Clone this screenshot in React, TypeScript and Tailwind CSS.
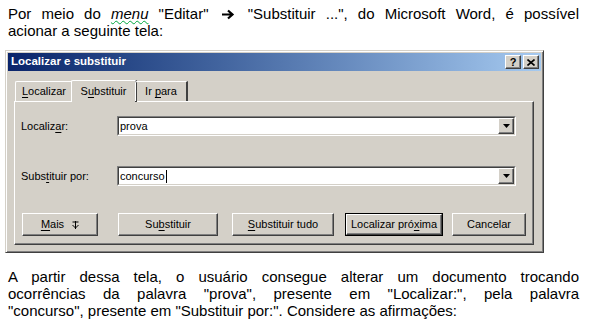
import React from "react";

const raised =
  "border border-t-white border-l-white border-r-[#404040] border-b-[#404040] shadow-[inset_-1px_-1px_0_#808080] bg-[#d4d0c8]";

function Key({ children }: { children: React.ReactNode }) {
  return <span className="underline underline-offset-[2px] decoration-1">{children}</span>;
}

function Combo({ value, caret }: { value: string; caret?: boolean }) {
  return (
    <div className="w-[399px] h-[20px] flex bg-white border border-t-[#808080] border-l-[#808080] border-r-white border-b-white">
      <div className="flex-1 flex items-center border border-t-[#404040] border-l-[#404040] border-r-[#d4d0c8] border-b-[#d4d0c8] pl-[1px]">
        <span className="text-[11px] leading-none text-black">{value}</span>
        {caret && <span className="inline-block w-[1px] h-[13px] bg-black ml-[1px]" />}
        <div className="flex-1" />
        <div className={`${raised} w-[16px] h-[16px] flex items-center justify-center`}>
          <svg width="7" height="4" viewBox="0 0 7 4">
            <path d="M0 0h7L3.5 4z" fill="#000" />
          </svg>
        </div>
      </div>
    </div>
  );
}

function Btn({ w, children, def }: { w: string; children: React.ReactNode; def?: boolean }) {
  const inner = <span className="flex items-center whitespace-pre">{children}</span>;
  if (def) {
    return (
      <div className={`${w} h-[23px] border border-black`}>
        <div className={`${raised} w-full h-full flex items-center justify-center text-[11px] text-black`}>
          {inner}
        </div>
      </div>
    );
  }
  return (
    <div className={`${raised} ${w} h-[23px] flex items-center justify-center text-[11px] text-black`}>
      {inner}
    </div>
  );
}

function Arrow() {
  return (
    <svg width="13" height="11" viewBox="0 0 13 11" className="inline-block align-[-1px] mx-[3px]">
      <path d="M0 5.5h10M6 1.5l4.5 4-4.5 4" stroke="#000" strokeWidth="2.2" fill="none" />
    </svg>
  );
}

const jline = "block text-justify [text-align-last:justify]";

export default function App() {
  return (
    <div className="w-[593px] h-[335px] bg-white overflow-hidden font-['Liberation_Sans',Arial,sans-serif] text-black">
      <div className="w-[571px] ml-[8px] pt-[5px] text-[15px] leading-[17px]">
        <span className={jline}>
          Por meio do <i className="underline decoration-wavy decoration-green-600 decoration-1">menu</i> "Editar" <Arrow /> "Substituir ...", do Microsoft Word, é possível
        </span>
        <span className="block">acionar a seguinte tela:</span>
      </div>

      <div className="ml-[5px] mt-[11px] w-[539px] h-[203px] bg-[#d4d0c8] border border-t-[#d4d0c8] border-l-[#d4d0c8] border-r-[#404040] border-b-[#404040] shadow-[inset_1px_1px_0_#fff,inset_-1px_-1px_0_#808080] p-[2px] flex flex-col">
        {/* title bar */}
        <div className="h-[18px] bg-gradient-to-r from-[#0a246a] to-[#a6caf0] flex items-center pl-[3px] pr-[2px]">
          <span className="text-white font-bold text-[11.5px] leading-none">Localizar e substituir</span>
          <div className="flex-1" />
          <div className={`${raised} w-[16px] h-[14px] flex items-center justify-center text-[11px] font-bold leading-none`}>?</div>
          <div className={`${raised} w-[16px] h-[14px] ml-[2px] flex items-center justify-center`}>
            <svg width="8" height="7" viewBox="0 0 8 7">
              <path d="M0.5 0.5L7.5 6.5M7.5 0.5L0.5 6.5" stroke="#000" strokeWidth="1.6" />
            </svg>
          </div>
        </div>

        {/* tabs */}
        <div className="flex items-end mt-[8px] ml-[7px] h-[22px] relative z-10 text-[11px]">
          <div className="h-[20px] w-[58px] flex items-center justify-center border-t border-l border-t-white border-l-white border-r border-r-[#404040] rounded-tl-[2px]">
            <span><Key>L</Key>ocalizar</span>
          </div>
          <div className="h-[22px] w-[66px] -ml-[2px] -mr-[2px] bg-[#d4d0c8] flex items-center justify-center border-t border-l border-t-white border-l-white border-r-2 border-r-[#404040] rounded-tl-[2px] -mb-[1px] pb-[1px]">
            <span>S<Key>u</Key>bstituir</span>
          </div>
          <div className="h-[20px] w-[53px] flex items-center justify-center border-t border-l border-t-white border-l-white border-r-2 border-r-[#404040] rounded-tl-[2px]">
            <span className="whitespace-pre">Ir <Key>p</Key>ara</span>
          </div>
        </div>

        {/* panel */}
        <div className="ml-[6px] w-[520px] h-[144px] border border-t-white border-l-white border-r-[#404040] border-b-[#404040] shadow-[inset_-1px_-1px_0_#808080] flex flex-col text-[11px]">
          <div className="flex items-center mt-[14px] pl-[6px]">
            <span className="w-[96px]">Localiz<Key>a</Key>r:</span>
            <Combo value="prova" />
          </div>
          <div className="flex items-center mt-[30px] pl-[6px]">
            <span className="w-[96px]">Subs<Key>t</Key>ituir por:</span>
            <Combo value="concurso" caret />
          </div>
          <div className="flex items-center mt-[27px] pl-[7px]">
            <Btn w="w-[76px]">
              <Key>M</Key>ais
              <svg width="7" height="8" viewBox="0 0 7 8" className="ml-[8px]">
                <path d="M3.5 0v8M0.5 1h6M0.5 4l3 3 3-3" stroke="#000" strokeWidth="1" fill="none" />
              </svg>
            </Btn>
            <div className="ml-[20px]">
              <Btn w="w-[100px]">Su<Key>b</Key>stituir</Btn>
            </div>
            <div className="ml-[14px]">
              <Btn w="w-[102px]"><Key>S</Key>ubstituir tudo</Btn>
            </div>
            <div className="ml-[11px]">
              <Btn w="w-[98px]" def>Localizar pró<Key>x</Key>ima</Btn>
            </div>
            <div className="ml-[9px]">
              <Btn w="w-[74px]">Cancelar</Btn>
            </div>
          </div>
        </div>
      </div>

      <div className="w-[571px] ml-[8px] mt-[15px] text-[15px] leading-[17px]">
        <span className={jline}>A partir dessa tela, o usuário consegue alterar um documento trocando</span>
        <span className={jline}>ocorrências da palavra "prova", presente em "Localizar:", pela palavra</span>
        <span className="block">"concurso", presente em "Substituir por:". Considere as afirmações:</span>
      </div>
    </div>
  );
}
